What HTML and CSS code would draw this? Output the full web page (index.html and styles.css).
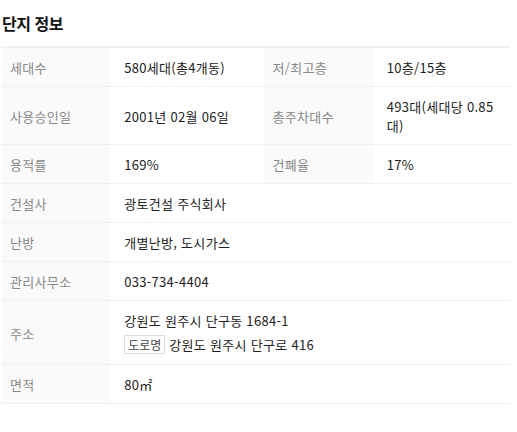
FILE: index.html
```html
<!DOCTYPE html>
<html lang="ko">
<head>
  <meta charset="UTF-8" />
  <title>단지 정보</title>
  <link rel="stylesheet" href="styles.css">
</head>
<body>

<div class="complex-info">
  <h3 class="section-title">단지 정보</h3>
  <table class="info-table">
    <colgroup>
      <col class="col-label" />
      <col class="col-value" />
      <col class="col-label" />
      <col class="col-value-last" />
    </colgroup>
    <tr>
      <th>세대수</th>
      <td>580세대(총4개동)</td>
      <th>저/최고층</th>
      <td>10층/15층</td>
    </tr>
    <tr>
      <th>사용승인일</th>
      <td>2001년 02월 06일</td>
      <th>총주차대수</th>
      <td>493대(세대당 0.85대)</td>
    </tr>
    <tr>
      <th>용적률</th>
      <td>169%</td>
      <th>건폐율</th>
      <td>17%</td>
    </tr>
    <tr>
      <th>건설사</th>
      <td colspan="3">광토건설 주식회사</td>
    </tr>
    <tr>
      <th>난방</th>
      <td colspan="3">개별난방, 도시가스</td>
    </tr>
    <tr>
      <th>관리사무소</th>
      <td colspan="3">033-734-4404</td>
    </tr>
    <tr>
      <th>주소</th>
      <td colspan="3">
        <div>강원도 원주시 단구동 1684-1</div>
        <div class="road-line"><span class="badge">도로명</span> 강원도 원주시 단구로 416</div>
      </td>
    </tr>
    <tr>
      <th>면적</th>
      <td colspan="3">80㎡</td>
    </tr>
  </table>
</div>

</body>
</html>
```

FILE: styles.css
```css
body {
  margin: 0;
  background: #fff;
  font-family: "Noto Sans CJK KR", "Noto Sans", sans-serif;
  color: #222;
}

.complex-info {
  width: 510px;
  padding: 0 0 0 1px;
}

.section-title {
  margin: 0;
  padding: 11px 0 0 1px;
  height: 35px;
  font-size: 16px;
  font-weight: 700;
  color: #111;
  letter-spacing: -0.5px;
}

.info-table {
  width: 509px;
  border-collapse: collapse;
  table-layout: fixed;
  font-size: 13px;
  line-height: 19px;
  letter-spacing: 0.3px;
  border-top: 2px solid #f1f1f1;
}

.col-label {
  width: 109px;
}
.col-value {
  width: 153px;
}
.col-value-last {
  width: 137px;
}

.info-table th,
.info-table td {
  border-bottom: 1px solid #f1f1f1;
  text-align: left;
  vertical-align: middle;
  padding: 10px 14px 9px;
}

.info-table th {
  padding-left: 9px;
  padding-right: 9px;
  background: #fafafa;
  font-weight: normal;
  color: #888;
}

.info-table td {
  color: #222;
}

.road-line {
  margin-top: 4px;
  line-height: 21px;
}

.badge {
  display: inline-block;
  padding: 0 3px;
  border: 1px solid #ddd;
  line-height: 17px;
  font-size: 12px;
  letter-spacing: 0;
  color: #444;
  background: #fff;
}
```
